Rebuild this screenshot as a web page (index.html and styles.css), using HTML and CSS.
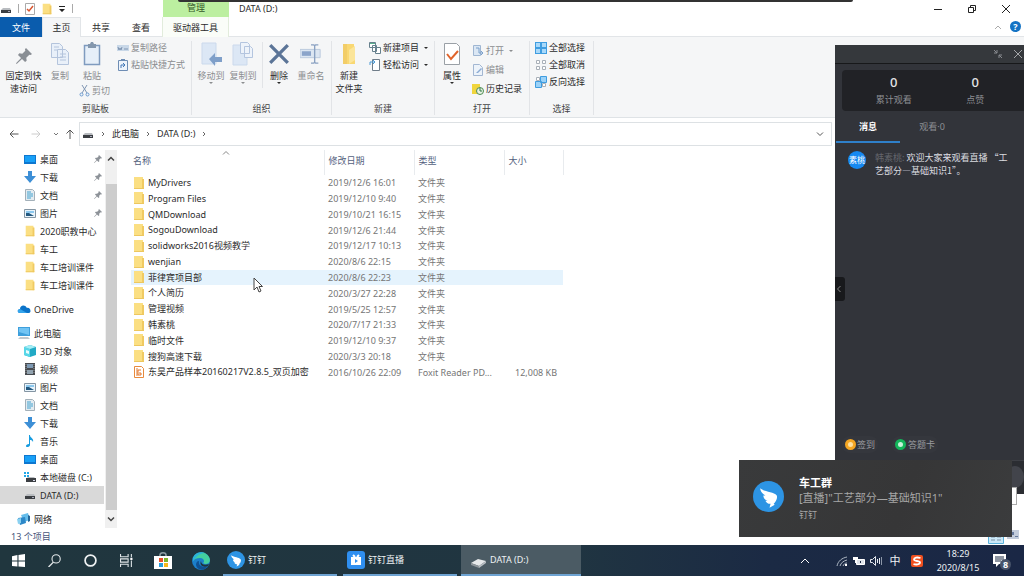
FILE: index.html
```html
<!DOCTYPE html>
<html lang="zh-CN">
<head>
<meta charset="utf-8">
<title>DATA (D:)</title>
<link rel="stylesheet" href="styles.css">
</head>
<body>
<svg class="sprite" width="0" height="0" aria-hidden="true">
  <symbol id="folder" viewBox="0 0 12 14"><path d="M1 1h9v2h1v10H1z" fill="#fbdf83"/><path d="M9 3h2v10H9z" fill="#f0ca62"/><path d="M1 12h10v1H1z" fill="#edc75f"/></symbol>
  <symbol id="drive" viewBox="0 0 12 12"><path d="M3 5h7l1 2H1z" fill="#b9bcc0"/><path d="M1 7h10v3H1z" fill="#3c3f43"/><path d="M8 8h2v1H8z" fill="#aab"/></symbol>
  <symbol id="sysdrive" viewBox="0 0 12 12"><path d="M0 1h2v2H0zM3 1h2v2H3zM0 4h2v2H0zM3 4h2v2H3z" fill="#22a7e6"/><path d="M4 6h6l1 1H3z" fill="#b9bcc0"/><path d="M2 7h10v4H2z" fill="#3c3f43"/><path d="M9 9h2v1H9z" fill="#dde"/></symbol>
  <symbol id="desktop" viewBox="0 0 12 12"><path d="M0 2h12v9H0z" fill="#0e77cf"/><path d="M1 3h10v6H1z" fill="#18a0f7"/></symbol>
  <symbol id="down" viewBox="0 0 12 12"><path d="M4 0h4v5h4L6 12 0 5h4z" fill="#3d8fd6"/></symbol>
  <symbol id="doc" viewBox="0 0 12 12"><path d="M1.500.500h7l2 2v9h-9z" fill="#e3ebf0" stroke="#a3b0b9"/><path d="M3 3h4M3 5h6M3 7h6M3 9h4" stroke="#43a3d0"/></symbol>
  <symbol id="picture" viewBox="0 0 12 12"><path d="M.500 2.500h11v8H.500z" fill="#e9f4fb" stroke="#8495a3"/><path d="M2 4h8v2H2z" fill="#8cc8ee"/><path d="M2 9V6l3 0 5 3z" fill="#22587f"/></symbol>
  <symbol id="pin" viewBox="0 0 12 12"><path d="M7.500 0L12 4.500l-1 .800-1-.300-2.300 2.300.3 2.200-1.200 1L4.500 8.200.500 12 0 11.500 3.800 7.500 1.500 5.200l1-1.200 2.200.3L7 2 6.700 1z" fill="currentColor"/></symbol>
  <symbol id="cloud" viewBox="0 0 14 12"><path d="M3 10C0 10 0 6 3 6c0-4 5-5 7-1 3-1 5 4 2 5z" fill="#0b73c9"/><path d="M3 10c-3 0-3-4 0-4l7 4z" fill="#35a5ec"/></symbol>
  <symbol id="pc" viewBox="0 0 14 12"><path d="M1 0h12v9H1z" fill="#3e9fdc"/><path d="M2 1h10v7L2 5z" fill="#71c4f4"/><path d="M3 10h8l2 2H1z" fill="#c0c8ce"/></symbol>
  <symbol id="cube" viewBox="0 0 12 12"><path d="M0 2l6-2 6 2v8l-6 2-6-2z" fill="#21a9c5"/><path d="M0 2l6 2v8l-6-2z" fill="#57d7e8"/><path d="M0 2l6-2 6 2-6 2z" fill="#a4eef5"/><path d="M2 5l3 1v3L2 8z" fill="#e9fbfd"/></symbol>
  <symbol id="video" viewBox="0 0 12 12"><path d="M1 0h10v12H1z" fill="#474b50"/><path d="M3 1h6v4H3z" fill="#7e9ab4"/><path d="M3 7h6v4H3z" fill="#92a3b0"/><path d="M2 1v10M10 1v10" stroke="#999" stroke-dasharray="1 1"/></symbol>
  <symbol id="music" viewBox="0 0 12 12"><path d="M5 0h1c0 3 4 3 3 7-1-2-2-2-3-2v5c0 2-4 3-4 1 0-1 1-2 3-2z" fill="#169ce0"/></symbol>
  <symbol id="network" viewBox="0 0 14 12"><path d="M4 2l7-2 2 7-6 2z" fill="#65bdeb"/><path d="M1 5l7-1 1 6-6 2z" fill="#2c88c8"/><path d="M0 6l4-1v5l-3 1z" fill="#8ad1f1"/><path d="M11 2l2 1v5l-2 1z" fill="#25679a"/></symbol>
  <symbol id="pages" viewBox="0 0 20 24"><path d="M1.500 1.500h8l3 3v11h-11zM7.500 7.500h8l3 3v12h-11z" fill="#e9f0f9" stroke="#b4c4dc"/><path d="M4 5h5M4 8h3M10 12h6M10 15h6M10 18h6" stroke="#b4c4dc"/></symbol>
  <symbol id="clip" viewBox="0 0 18 24"><path d="M1.500 3.500h15v19h-15z" fill="#e6eff9" stroke="#7f9bbf" stroke-width="1.500"/><path d="M5 2h2l1-2h2l1 2h2v4H5z" fill="#8497ad"/></symbol>
  <symbol id="moveto" viewBox="0 0 22 24"><path d="M2 1h14v21H2z" fill="#dce7f5" stroke="#cbd9ec"/><path d="M9 17l6-6v4h7v5h-7v4z" fill="#7f9fc9"/></symbol>
  <symbol id="copyto" viewBox="0 0 22 24"><path d="M1 3h14v20H1z" fill="#dce7f5" stroke="#cbd9ec"/><path d="M8.500.500h7l2 2v9h-9zM12.500 4.500h6l2 2v9h-8z" fill="#eef3fa" stroke="#b4c5df"/></symbol>
  <symbol id="cross" viewBox="0 0 20 20"><path d="M2 2l16 16M18 2L2 18" stroke="#5b7497" stroke-width="3"/></symbol>
  <symbol id="rename" viewBox="0 0 24 22"><path d="M0 6h22v9H0z" fill="#dce6f2" stroke="#b9c8dd"/><path d="M2 8h10v5H2z" fill="#8ba4ca"/><path d="M12 1h3l1 1 1-1h3M16 2v18M12 21h3l1-1 1 1h3" fill="none" stroke="#8aa1c2" stroke-width="1.500"/></symbol>
  <symbol id="bird" viewBox="0 0 30 30"><circle cx="15" cy="15" r="15" fill="#2d94e4"/><path d="M7 7c5 4 13 3 16 7 1 3-1 6-3 8l1 1-5 3 1-4c-3 0-4-1-5-3l2 0c-3-1-4-3-4-5l2 0C9 12 7 10 7 7z" fill="#fff"/></symbol>
</svg>

<div class="screen">
<main class="explorer">
  <header class="titlebar">
    <div class="quick">
      <svg class="i12"><use href="#drive"/></svg><span class="bar"></span>
      <svg class="i12" viewBox="0 0 12 12"><path d="M1.500.500h9v11h-9z" fill="#fff" stroke="#aaa"/><path d="M3 6l2 2 4-5" fill="none" stroke="#d8542e" stroke-width="1.500"/></svg>
      <svg class="i12"><use href="#folder"/></svg>
      <svg class="i8" viewBox="0 0 8 8"><path d="M1 1h6v1H1zM1 4h6L4 7z" fill="#222"/></svg><span class="bar"></span>
    </div>
    <div class="manage">管理</div>
    <h1 class="title">DATA (D:)</h1>
    <div class="winbtns">
      <button aria-label="最小化"><svg viewBox="0 0 10 10"><path d="M1 5.500h8" stroke="#222"/></svg></button>
      <button aria-label="还原"><svg viewBox="0 0 10 10"><path d="M1.500 3.500h5v5h-5zM3.500 3V1.500h5v5H7" fill="none" stroke="#222"/></svg></button>
      <button aria-label="关闭"><svg viewBox="0 0 10 10"><path d="M1 1l8 8M9 1L1 9" stroke="#222"/></svg></button>
    </div>
  </header>

  <nav class="tabs">
    <button class="tab file">文件</button><button class="tab on">主页</button><button class="tab">共享</button><button class="tab">查看</button><button class="tab tool">驱动器工具</button>
    <span class="help"><svg class="i8" viewBox="0 0 8 8"><path d="M1 6l3-3 3 3" fill="none" stroke="#aaa"/></svg><button class="q">?</button></span>
  </nav>

  <section class="ribbon">
    <div class="group g-clip">
      <div class="tools">
        <button class="big"><svg class="pinbig"><use href="#pin"/></svg>固定到快<br>速访问</button>
        <button class="big dim narrow"><svg><use href="#pages"/></svg>复制</button>
        <div class="col paste">
          <button class="big dim narrow"><svg><use href="#clip"/></svg>粘贴</button>
          <button class="small dim"><svg viewBox="0 0 12 12"><path d="M3 0l5 8M8 0L3 8" stroke="#7f95b2"/><circle cx="2.500" cy="9.500" r="1.500" fill="none" stroke="#6b9ad0"/><circle cx="8.500" cy="9.500" r="1.500" fill="none" stroke="#6b9ad0"/></svg>剪切</button>
        </div>
        <div class="col links">
          <button class="small dim"><svg viewBox="0 0 12 12"><path d="M0 3h12v6H0z" fill="#c9d8e8"/><path d="M1 5l1 3 1-2 1 2 1-3M7 7h4" fill="none" stroke="#7f95b2"/></svg>复制路径</button>
          <button class="small dim"><svg viewBox="0 0 12 12"><path d="M1.500 1.500h9v10h-9z" fill="#eef4fb" stroke="#6e8db4"/><path d="M4 0h4v2H4z" fill="#6e8db4"/><path d="M4 9V6h3M6 4l2 2-2 2" fill="none" stroke="#4479b8"/></svg>粘贴快捷方式</button>
        </div>
      </div>
      <div class="gname">剪贴板</div>
    </div>
    <div class="group g-org">
      <div class="tools">
        <button class="big dim narrow drop"><svg><use href="#moveto"/></svg>移动到</button>
        <button class="big dim narrow drop"><svg><use href="#copyto"/></svg>复制到</button>
        <span class="split"></span>
        <button class="big narrow drop"><svg><use href="#cross"/></svg>删除</button>
        <button class="big dim narrow"><svg><use href="#rename"/></svg>重命名</button>
      </div>
      <div class="gname">组织</div>
    </div>
    <div class="group g-new">
      <div class="tools">
        <button class="big narrow"><svg viewBox="0 0 20 24"><path d="M4 2h11v4h1v16H4z" fill="#f9d873"/><path d="M10 8l6-4v14l-6 4z" fill="#fbe59a"/><path d="M4 2h4v20H4z" fill="#f2cd68"/></svg>新建<br>文件夹</button>
        <div class="col">
          <button class="small arrow"><svg viewBox="0 0 12 12"><path d="M.500.500h6v5h-6zM3.500 3.500h4v6h-4zM6.500 5.500h5v6h-5z" fill="#fff" stroke="#66808d"/><path d="M1 1h5v1H1z" fill="#5bb08f"/></svg>新建项目</button>
          <button class="small arrow"><svg viewBox="0 0 12 12"><path d="M3.500.500h7v11h-7z" fill="#fff" stroke="#6f7d89"/><path d="M1 6V3h4M4 1l2 2-2 2" fill="none" stroke="#4b9ad5"/></svg>轻松访问</button>
        </div>
      </div>
      <div class="gname">新建</div>
    </div>
    <div class="group g-open">
      <div class="tools">
        <button class="big narrow drop"><svg viewBox="0 0 18 24"><path d="M1.500 1.500h12l3 3v18h-15z" fill="#fff" stroke="#9aa0a6"/><path d="M4 12l4 5 7-8" fill="none" stroke="#e0642c" stroke-width="2"/></svg>属性</button>
        <div class="col three">
          <button class="small dim arrow"><svg viewBox="0 0 12 12"><path d="M1.500.500h7v10h-7z" fill="#dbe7f4" stroke="#9fb6d2"/><path d="M4 3h3v5h4M9 6l2 2-2 2" fill="none" stroke="#7ba0cb"/></svg>打开</button>
          <button class="small dim"><svg viewBox="0 0 12 12"><path d="M1.500.500h6l3 3v8h-9z" fill="#edf3fa" stroke="#a3b7d2"/><path d="M4 9l5-5 1 1-4 4z" fill="#8cacd4"/></svg>编辑</button>
          <button class="small"><svg viewBox="0 0 12 12"><path d="M0 1h8v10H0z" fill="#f0d53d"/><circle cx="8" cy="8" r="3.500" fill="#e8f1e4" stroke="#4b8b52"/><path d="M8 5v3h2" fill="none" stroke="#2f7a45"/></svg>历史记录</button>
        </div>
      </div>
      <div class="gname">打开</div>
    </div>
    <div class="group g-sel">
      <div class="tools">
        <div class="col">
          <button class="small"><svg viewBox="0 0 12 12"><path d="M0 0h12v12H0z" fill="#3f9de0"/><path d="M1 1h4v4H1zM7 1h4v4H7zM1 7h4v4H1zM7 7h4v4H7z" fill="#a9d9fa"/></svg>全部选择</button>
          <button class="small"><svg viewBox="0 0 12 12"><path d="M1.500 1.500h3v3h-3zM7.500 1.500h3v3h-3zM1.500 7.500h3v3h-3zM7.500 7.500h3v3h-3z" fill="#fff" stroke="#a9b0b8"/></svg>全部取消</button>
          <button class="small"><svg viewBox="0 0 12 12"><path d="M1.500 1.500h3v3h-3zM7.500 7.500h3v3h-3z" fill="#fff" stroke="#a9b0b8"/><path d="M5.500.500h6v6h-6zM.500 5.500h6v6h-6z" fill="#9bd2f8" stroke="#3f9de0"/></svg>反向选择</button>
        </div>
      </div>
      <div class="gname">选择</div>
    </div>
  </section>

  <div class="address">
    <div class="arrows">
      <svg viewBox="0 0 10 10"><path d="M9.500 5H1M4.500 1.500L1 5l3.500 3.500" fill="none" stroke="#555"/></svg>
      <svg viewBox="0 0 10 10"><path d="M.500 5H9M5.500 1.500L9 5 5.500 8.500" fill="none" stroke="#ccc"/></svg>
      <svg class="mini" viewBox="0 0 6 10"><path d="M1 4l2 2 2-2" fill="none" stroke="#777"/></svg>
      <svg viewBox="0 0 10 10"><path d="M5 10V1M1.500 4.500L5 1l3.500 3.500" fill="none" stroke="#555"/></svg>
    </div>
    <div class="path">
      <svg class="i12"><use href="#drive"/></svg>
      <svg class="sep" viewBox="0 0 4 8"><path d="M1 2l2 2-2 2" fill="none" stroke="#666"/></svg>
      <a href="#pc">此电脑</a>
      <svg class="sep" viewBox="0 0 4 8"><path d="M1 2l2 2-2 2" fill="none" stroke="#666"/></svg>
      <a href="#d">DATA (D:)</a>
      <svg class="sep" viewBox="0 0 4 8"><path d="M1 2l2 2-2 2" fill="none" stroke="#666"/></svg>
      <svg class="i8 end" viewBox="0 0 8 8"><path d="M1 2.500l3 3 3-3" fill="none" stroke="#555"/></svg>
    </div>
  </div>

  <div class="content">
    <aside class="tree">
      <ul>
        <li><svg><use href="#desktop"/></svg>桌面<svg class="pin"><use href="#pin"/></svg></li>
        <li><svg><use href="#down"/></svg>下载<svg class="pin"><use href="#pin"/></svg></li>
        <li><svg><use href="#doc"/></svg>文档<svg class="pin"><use href="#pin"/></svg></li>
        <li><svg><use href="#picture"/></svg>图片<svg class="pin"><use href="#pin"/></svg></li>
        <li><svg><use href="#folder"/></svg>2020职教中心</li>
        <li><svg><use href="#folder"/></svg>车工</li>
        <li><svg><use href="#folder"/></svg>车工培训课件</li>
        <li><svg><use href="#folder"/></svg>车工培训课件</li>
      </ul>
      <ul><li class="root"><svg><use href="#cloud"/></svg>OneDrive</li></ul>
      <ul>
        <li class="root"><svg><use href="#pc"/></svg>此电脑</li>
        <li><svg><use href="#cube"/></svg>3D 对象</li>
        <li><svg><use href="#video"/></svg>视频</li>
        <li><svg><use href="#picture"/></svg>图片</li>
        <li><svg><use href="#doc"/></svg>文档</li>
        <li><svg><use href="#down"/></svg>下载</li>
        <li><svg><use href="#music"/></svg>音乐</li>
        <li><svg><use href="#desktop"/></svg>桌面</li>
        <li><svg><use href="#sysdrive"/></svg>本地磁盘 (C:)</li>
        <li class="sel"><svg><use href="#drive"/></svg>DATA (D:)</li>
      </ul>
      <ul><li class="root"><svg><use href="#network"/></svg>网络</li></ul>
    </aside>
    <div class="scroll">
      <svg viewBox="0 0 8 8"><path d="M1 5.500l3-3 3 3" fill="none" stroke="#444" stroke-width="1.500"/></svg>
      <span class="thumb"></span>
      <svg viewBox="0 0 8 8"><path d="M1 2.500l3 3 3-3" fill="none" stroke="#444" stroke-width="1.500"/></svg>
    </div>
    <div class="files">
      <svg class="sort" viewBox="0 0 8 8"><path d="M1 5.500l3-3 3 3" fill="none" stroke="#888"/></svg>
      <table>
        <colgroup><col class="c-name"><col class="c-date"><col class="c-type"><col class="c-size"></colgroup>
        <thead><tr><th>名称</th><th>修改日期</th><th>类型</th><th>大小</th></tr></thead>
        <tbody>
          <tr><td><svg><use href="#folder"/></svg>MyDrivers</td><td>2019/12/6 16:01</td><td>文件夹</td><td></td></tr>
          <tr><td><svg><use href="#folder"/></svg>Program Files</td><td>2019/12/10 9:40</td><td>文件夹</td><td></td></tr>
          <tr><td><svg><use href="#folder"/></svg>QMDownload</td><td>2019/10/21 16:15</td><td>文件夹</td><td></td></tr>
          <tr><td><svg><use href="#folder"/></svg>SogouDownload</td><td>2019/12/6 21:44</td><td>文件夹</td><td></td></tr>
          <tr><td><svg><use href="#folder"/></svg>solidworks2016视频教学</td><td>2019/12/17 10:13</td><td>文件夹</td><td></td></tr>
          <tr><td><svg><use href="#folder"/></svg>wenjian</td><td>2020/8/6 22:15</td><td>文件夹</td><td></td></tr>
          <tr class="hover"><td><svg><use href="#folder"/></svg>菲律宾项目部</td><td>2020/8/6 22:23</td><td>文件夹</td><td></td></tr>
          <tr><td><svg><use href="#folder"/></svg>个人简历</td><td>2020/3/27 22:28</td><td>文件夹</td><td></td></tr>
          <tr><td><svg><use href="#folder"/></svg>管理视频</td><td>2019/5/25 12:57</td><td>文件夹</td><td></td></tr>
          <tr><td><svg><use href="#folder"/></svg>韩素桃</td><td>2020/7/17 21:33</td><td>文件夹</td><td></td></tr>
          <tr><td><svg><use href="#folder"/></svg>临时文件</td><td>2019/12/10 9:37</td><td>文件夹</td><td></td></tr>
          <tr><td><svg><use href="#folder"/></svg>搜狗高速下载</td><td>2020/3/3 20:18</td><td>文件夹</td><td></td></tr>
          <tr><td><svg viewBox="0 0 12 14"><path d="M1.500 1.500h7l2 2v9h-9z" fill="#fff" stroke="#e88a3c"/><path d="M8 5H5v5h3V8H6M4 3v8" fill="none" stroke="#e2762a"/></svg>东昊产品样本20160217V2.8.5_双页加密</td><td>2016/10/26 22:09</td><td>Foxit Reader PD...</td><td>12,008 KB</td></tr>
        </tbody>
      </table>
    </div>
  </div>
  <footer class="status"><span>13 个项目</span>
    <span class="views"><svg class="v1" viewBox="0 0 16 14"><path d="M.500.500h15v13H.500z" fill="#cbe8f8" stroke="#5bb2dd"/><path d="M3 4h4M3 7h4M3 10h4M9 4h4M9 7h4M9 10h4" stroke="#7c93a8"/></svg><svg class="v2" viewBox="0 0 12 10"><path d="M0 0h12v9H0z" fill="#c3ccdb"/><path d="M2 2h5v3H2zM8 6h3v1H8z" fill="#66799b"/></svg></span>
  </footer>
</main>

<footer class="taskbar">
  <button class="ico" aria-label="开始"><svg viewBox="0 0 12 12"><path d="M0 2l5-1v5H0zM6 1l6-1v6H6zM0 7h5v4.500L0 11zM6 7h6v5l-6-.500z" fill="#fff"/></svg></button>
  <button class="ico" aria-label="搜索"><svg viewBox="0 0 12 12"><circle cx="7.500" cy="4.500" r="3.800" fill="none" stroke="#e3e8ea"/><path d="M5 7.500L.500 12" stroke="#e3e8ea" stroke-width="1.300"/></svg></button>
  <button class="ico" aria-label="Cortana"><svg viewBox="0 0 12 12"><circle cx="6" cy="6" r="5" fill="none" stroke="#eef1f2" stroke-width="1.600"/></svg></button>
  <button class="ico" aria-label="任务视图"><svg viewBox="0 0 12 12"><path d="M.500 0v2.500h7V0M.500 12V9.500h7V12M.500 4.500h7v3h-7zM10.500 0v3M10.500 6v6" fill="none" stroke="#dfe5e8"/><path d="M9.500 3.500h2v2h-2z" fill="#fff"/></svg></button>
  <button class="ico wide" aria-label="应用商店"><svg viewBox="0 0 18 18"><path d="M6 6V3c0-3 6-3 6 0v3" fill="none" stroke="#8d9da5" stroke-width="1.500"/><path d="M0 4h18v13H0z" fill="#fff"/><path d="M5 6h4v4H5z" fill="#e8502c"/><path d="M10 6h4v4h-4z" fill="#7fb52c"/><path d="M5 11h4v4H5z" fill="#269cdc"/><path d="M10 11h4v4h-4z" fill="#f6b81d"/></svg></button>
  <button class="ico wide" aria-label="Edge"><svg viewBox="0 0 18 18"><circle cx="9" cy="9" r="9" fill="#1b7fcb"/><path d="M1 6C4-2 17-1 18 8c0 4-5 5-7 3 2-1 1-5-3-5-3 0-6 1-7 3z" fill="#43cfa0"/><path d="M1 6C3 1 8-1 13 1 9 1 5 3 1 9z" fill="#2bb3dc"/><path d="M7 9c-1 5 4 7 9 5-3 5-11 5-12-1 0-2 1-4 3-4z" fill="#105192"/><path d="M9 9c0 3 3 5 8 3l-1 2c-5 2-9-1-7-5z" fill="#20343c"/></svg></button>
  <button class="task"><svg><use href="#bird"/></svg>钉钉</button>
  <button class="task second"><svg viewBox="0 0 18 18"><rect width="18" height="18" rx="3" fill="#2f8ff0"/><path d="M4 6h10v8H4z" fill="#fff"/><path d="M6 4l2 2M12 4l-2 2" stroke="#fff" stroke-width="2"/><path d="M8 8l3 2-3 2z" fill="#2f8ff0"/></svg>钉钉直播</button>
  <button class="task active"><svg viewBox="0 0 18 18"><path d="M2 12l7-4 8 2-7 5z" fill="#e6e8ea"/><path d="M2 12l8 3v2l-8-3z" fill="#8e959b"/><path d="M10 15l7-5v2l-7 5z" fill="#b8bec3"/></svg>DATA (D:)</button>
  <div class="tray">
    <svg class="up" viewBox="0 0 12 12"><path d="M2 8l4-4 4 4" fill="none" stroke="#fff"/></svg>
    <svg viewBox="0 0 12 12"><path d="M1 11c1-5 5-8 10-9M4 11c1-3 3-5 7-6M7 11c1-2 2-3 4-3" fill="none" stroke="#aeb8c4"/><path d="M9 9h2v2H9z" fill="#fff"/></svg>
    <svg viewBox="0 0 12 12"><path d="M3.500 4.500h8v5h-8z" fill="#dfe4ea" stroke="#fff"/><path d="M0 2h5v3H3v3H2V5H0z" fill="#fff"/><path d="M7 6h1v2H7z" fill="#1b2a44"/></svg>
    <svg viewBox="0 0 12 12"><path d="M.500 4.500h2l3-3v9l-3-3h-2zM7.500 4v4M9.500 3v6" fill="none" stroke="#e5e9ee"/><path d="M11.500 2v8" stroke="#8c97a8"/></svg>
    <span class="ime">中</span>
    <svg class="sogou" viewBox="0 0 12 12"><rect width="12" height="12" rx="2" fill="#f0501f"/><path d="M9.500 3C6 2 3 2.500 3 4.500s6 1 6 3S5 10 2.500 9" fill="none" stroke="#fff" stroke-width="1.800"/></svg>
    <div class="clock">18:29<br>2020/8/15</div>
    <button class="action" aria-label="8 条通知"><svg viewBox="0 0 14 14"><path d="M0 0h13v10H6l-3 3v-3H0z" fill="#fff"/><path d="M2 3h9M2 5h9M2 7h6" stroke="#1b2a44"/></svg><span class="badge">8</span></button>
  </div>
</footer>

<div class="strip"></div>
<svg class="cursor" viewBox="0 0 10 16"><path d="M1 1v12l3-3 2 5 2-1-2-4.500h3.500z" fill="#fff" stroke="#444"/></svg>

<aside class="live">
  <div class="livebar"><svg viewBox="0 0 10 10"><path d="M1 1l3 3M1 4h3V1M9 9L6 6M9 6H6v3" fill="none" stroke="#898b90"/></svg><button aria-label="关闭直播"><svg viewBox="0 0 10 10"><path d="M1 1l8 8M9 1L1 9" stroke="#a3a5a8"/></svg></button></div>
  <div class="stats"><div><b>0</b>累计观看</div><div><b>0</b>点赞</div></div>
  <div class="ltabs"><button class="on">消息</button><button>观看·0</button></div>
  <div class="msg"><span class="avatar">素桃</span><p><span class="who">韩素桃:</span> 欢迎大家来观看直播 “工艺部分—基础知识1”。</p></div>
  <div class="acts"><button><i class="sign"></i>签到</button><button><i class="card"></i>答题卡</button></div>
  <div class="lbottom"><span class="round"></span></div>
  <button class="handle" aria-label="收起"><svg viewBox="0 0 8 8"><path d="M5.500 1l-3 3 3 3" fill="none" stroke="#888"/></svg></button>
</aside>
<span class="peek"></span>

<section class="toast">
  <svg><use href="#bird"/></svg>
  <div><h2>车工群</h2><p>[直播]"工艺部分—基础知识1"</p><small>钉钉</small></div>
</section>
</div>
</body>
</html>
```

FILE: styles.css
```css
* { box-sizing: border-box; }
body { margin: 0; background: #fff; color: #2b2b2b; font: 9px/13px "Noto Sans", "Noto Sans CJK SC", sans-serif; }
button { margin: 0; padding: 0; border: 0; background: none; color: inherit; font: inherit; }
a { color: inherit; text-decoration: none; }
h1, h2, p, ul { margin: 0; padding: 0; font-weight: normal; font-size: inherit; }
svg { flex: none; display: block; }
.sprite { position: absolute; }
.screen { position: relative; display: flex; flex-direction: column; min-height: 100vh; overflow: hidden; }
.explorer { flex: 1; display: flex; flex-direction: column; }
.i12 { width: 12px; height: 12px; }
.i8 { width: 8px; height: 8px; }

.titlebar { display: flex; height: 17px; }
.quick { display: flex; align-items: center; gap: 5px; width: 163px; }
.bar { width: 1px; height: 9px; margin: 0 0 0 1px; background: #aaa; }
.manage { width: 66px; background: #bcefa0; color: #33572a; line-height: 15px; text-align: center; }
.title { flex: 1; padding-left: 10px; line-height: 18px; }
.winbtns { display: flex; align-items: center; margin-right: 1px; }
.winbtns button { width: 34px; display: grid; place-items: center; }
.winbtns svg { width: 10px; height: 10px; }

.tabs { display: flex; height: 20px; border-bottom: 1px solid #e2e5e8; }
.tab { width: 40px; height: 20px; }
.tab.file { width: 42px; background: #0a5cad; color: #fff; }
.tab.on { width: 39px; background: #f5f6f7; border: 1px solid #e2e5e8; border-width: 1px 1px 0; }
.tab.tool { width: 67px; margin-left: 1px; background: #fafdf8; border: 1px solid #e2ecdc; border-width: 0 1px; }
.help { display: flex; flex: 1; justify-content: flex-end; align-items: center; gap: 8px; padding-right: 3px; }
.q { width: 11px; height: 11px; border-radius: 50%; background: #1473c4; color: #fff; font-weight: bold; line-height: 11px; }

.ribbon { display: flex; padding: 4px 0 2px; background: #f5f6f7; border-bottom: 1px solid #dfe3e6; }
.group { display: flex; flex-direction: column; justify-content: space-between; height: 74px; border-right: 1px solid #e2e4e7; }
.g-clip { width: 192px; } .g-org { width: 140px; } .g-new { width: 103px; } .g-open { width: 95px; } .g-sel { width: 64px; }
.tools { display: flex; align-items: flex-start; padding-left: 3px; }
.gname { text-align: center; color: #444; }
.big { display: flex; flex-direction: column; align-items: center; width: 41px; padding-top: 1px; white-space: nowrap; text-align: center; }
.big svg { width: 22px; height: 24px; margin-bottom: 3px; }
.big .pinbig { width: 16px; height: 20px; margin: 4px 0 3px; color: #8a8f95; }
.big.narrow { width: 32px; }
.dim { color: #8b8d90; }
.drop::after { content: ""; border: 2px solid transparent; border-top-color: currentColor; }
.split { width: 1px; height: 46px; margin: 1px 0 0 3px; background: #e2e4e7; }
.col { display: flex; flex-direction: column; gap: 4px; padding-left: 4px; }
.links { padding-left: 7px; }
.three { gap: 6px; }
.three .small { height: 13px; }
.g-open .three { padding: 3px 0 0 4px; }
.g-new .tools, .g-open .tools { padding-left: 1px; }
.g-sel .tools { padding-left: 1px; }
.small { display: flex; align-items: center; gap: 2px; white-space: nowrap; }
.small svg { width: 12px; height: 12px; }
.paste { gap: 2px; padding-left: 0; }
.paste .small { gap: 1px; padding-left: 3px; }
.arrow::after { content: ""; margin: 2px 0 0 3px; border: 2px solid transparent; border-top-color: currentColor; }

.address { display: flex; align-items: center; padding: 4px 192px 0 0; }
.arrows { display: flex; align-items: center; gap: 12px; width: 79px; padding-left: 9px; }
.arrows svg { width: 10px; height: 10px; }
.arrows .mini { width: 6px; margin: 0 -6px 0 0; }
.path { display: flex; flex: 1; align-items: center; gap: 7px; height: 24px; padding: 0 7px 1px 2px; border: 1px solid #dde1e4; }
.sep { width: 4px; height: 8px; }
.end { margin-left: auto; }

.content { display: flex; flex: 1; padding-top: 4px; }
.tree { width: 105px; }
.tree ul { margin-bottom: 6px; list-style: none; }
.tree ul:last-child { margin: 0; }
.tree li { display: flex; align-items: center; gap: 4px; height: 18px; padding-left: 24px; white-space: nowrap; }
.tree li svg { width: 12px; height: 12px; }
.tree .root { gap: 3px; padding-left: 17px; }
.tree .root svg { width: 14px; }
.tree li .pin { width: 8px; height: 8px; margin: 0 3px 0 auto; color: #8d9298; }
.tree .sel { width: 104px; background: #d9d9d9; }
.scroll { display: flex; flex-direction: column; width: 12px; background: #f0f0f0; align-items: center; }
.scroll svg { width: 8px; height: 8px; margin: 5px 0; }
.thumb { flex: 1; width: 11px; margin-top: 16px; background: #cdcdcd; }
.files { position: relative; flex: 1; padding-left: 14px; }
.sort { position: absolute; left: 105px; top: -1px; width: 8px; height: 8px; }
table { width: 432px; height: 230px; table-layout: fixed; border-collapse: collapse; }
.c-name { width: 193px; } .c-date { width: 90px; } .c-type { width: 90px; } .c-size { width: 59px; }
th { height: 25px; padding: 0 0 4px 4px; border-right: 1px solid #e8ebee; text-align: left; font-weight: normal; color: #53617d; background: #fff; }
th:first-child, td:first-child { padding-left: 2px; }
td { padding: 0 0 0 4px; white-space: nowrap; color: #757575; line-height: 13px; }
td:first-child { color: #2b2b2b; }
td:last-child { padding-right: 6px; text-align: right; }
td svg { display: inline-block; width: 12px; height: 14px; margin: -2px 3px 0 0; vertical-align: middle; }
.hover { background: #e5f3fd; }
.status { display: flex; justify-content: space-between; height: 17px; padding: 2px 5px 0 11px; color: #46557a; }
.views { display: flex; gap: 3px; }
.v1 { width: 16px; height: 14px; } .v2 { width: 12px; height: 10px; }

.taskbar { display: flex; height: 31px; background: linear-gradient(90deg, #20363e, #203541 55%, #1b2a44 75%, #1a2745); color: #eef2f4; }
.ico { display: grid; place-items: center; width: 36px; }
.ico svg { width: 13px; height: 13px; }
.ico.wide { width: 38px; }
.ico.wide svg { width: 18px; height: 18px; }
.task { display: flex; align-items: center; gap: 3px; width: 114px; margin-left: 3px; padding-left: 4px; border-bottom: 2px solid #6ea3d2; }
.task svg { width: 18px; height: 18px; }
.task.second { margin-left: 6px; }
.task.active { width: 120px; margin-left: 4px; padding-left: 8px; background: #4b5b64; }
.tray { display: flex; align-items: center; gap: 5px; margin-left: auto; padding-right: 15px; }
.tray svg { width: 12px; height: 12px; }
.tray .up { margin: 0 20px 0 0; }
.ime { width: 12px; margin-left: 2px; font-size: 11px; text-align: center; }
.tray .sogou { margin-left: 5px; }
.clock { width: 60px; text-align: center; line-height: 14px; }
.action { position: relative; width: 16px; height: 16px; }
.action svg { width: 14px; height: 14px; }
.badge { position: absolute; left: 7px; top: 6px; width: 11px; height: 11px; border-radius: 50%; background: #47536a; color: #fff; line-height: 11px; font-weight: bold; }

.strip { position: absolute; left: 178px; right: 171px; top: 0; height: 2px; background: #333; border-radius: 0 0 2px 2px; }
.cursor { position: absolute; left: 253px; top: 277px; width: 10px; height: 16px; }

.live { position: absolute; right: 0; top: 45px; width: 189px; height: 449px; display: flex; flex-direction: column; background: #32343a; color: #8d8f94; }
.livebar { display: flex; justify-content: flex-end; align-items: center; gap: 10px; height: 19px; padding-right: 1px; background: #35383c; border-bottom: 1px solid #17181a; }
.livebar svg { width: 10px; height: 10px; }
.stats { display: flex; height: 41px; margin: 6px 0 0 7px; padding: 4px 8px 0 11px; background: #212226; border-radius: 4px 0 0 4px; }
.stats div { flex: 1; text-align: center; line-height: 17px; }
.stats b { display: block; color: #e5e6e8; font-size: 13px; font-weight: 500; }
.ltabs { display: flex; height: 32px; margin-left: 1px; }
.ltabs button { width: 64px; border-bottom: 2px solid transparent; }
.ltabs .on { color: #fff; border-color: #2f80ca; font-weight: bold; }
.msg { display: flex; gap: 9px; padding: 8px 10px 0 13px; align-items: flex-start; }
.avatar { flex: none; width: 18px; height: 18px; border-radius: 50%; background: #1688f0; color: #fff; font-size: 8px; line-height: 18px; text-align: center; white-space: nowrap; }
.msg p { color: #dcdde0; font-family: "Noto Sans CJK SC", sans-serif; }
.who { color: #64666c; }
.acts { display: flex; gap: 14px; margin-top: auto; padding: 0 7px 7px; color: #9a9ca0; }
.acts button { display: flex; align-items: center; gap: 1px; height: 17px; padding: 0 3px; border-radius: 8px; background: #35373d; }
.acts button + button { gap: 2px; }
.acts i { width: 11px; height: 11px; border: 3px solid #f5a623; border-radius: 50%; background: #ffe0a0; }
.acts .card { border-color: #13b55a; background: #c7f3da; }
.lbottom { display: flex; justify-content: flex-end; height: 34px; border-top: 1px solid #3d3f45; background: #2b2d32; }
.round { width: 18px; height: 22px; margin-top: 5px; border-radius: 50%; background: #42444b; }
.handle { position: absolute; left: 0; top: 232px; width: 10px; height: 24px; background: #18191c; border-radius: 0 3px 3px 0; }
.handle svg { width: 8px; height: 8px; }
.peek { position: absolute; right: 7px; bottom: 71px; width: 8px; height: 18px; background: #fff; border: 1px solid #aaa; }

.toast { position: absolute; right: 12px; bottom: 39px; width: 273px; height: 77px; display: flex; gap: 15px; padding: 15px 14px 0; background: linear-gradient(110deg, #393a3b, #363637 60%, #3b3c3d); color: #a6a6a6; }
.toast svg { width: 31px; height: 31px; margin-top: 6px; }
.toast h2 { color: #fff; font-size: 11px; font-weight: bold; line-height: 15px; }
.toast p { font-size: 11px; line-height: 16px; white-space: nowrap; }
.toast small { display: block; font-size: 9px; line-height: 17px; }
```
